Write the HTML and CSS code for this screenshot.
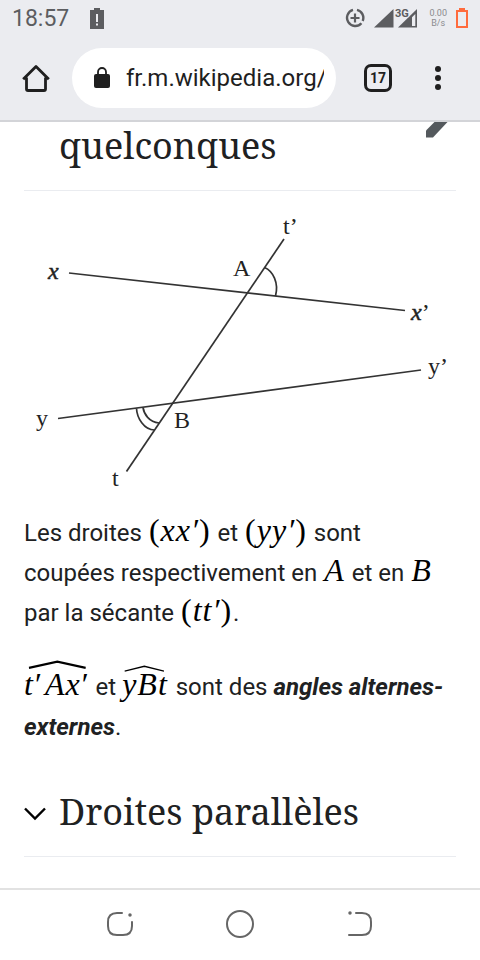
FILE: index.html
```html
<!DOCTYPE html>
<html lang="fr">
<head>
<meta charset="utf-8">
<meta name="viewport" content="width=device-width, initial-scale=1">
<title>Angles alternes-externes</title>
<link rel="stylesheet" href="styles.css">
</head>
<body>
<header class="chrome">
  <div class="status">
    <time class="clock">18:57</time>
    <svg class="warn" width="16" height="22" viewBox="0 0 16 22" aria-hidden="true">
      <path d="M1 2h4V0h6v2h4v19H1z" fill="#5c5d60"/>
      <path d="M8 6v8M8 15.500v2" stroke="#ebecf0" stroke-width="2"/>
    </svg>
    <div class="signals">
      <svg width="20" height="20" viewBox="0 0 20 20" fill="none" stroke="#5c5d60" aria-hidden="true">
        <path d="M8 1.900A8.200 8.200 0 1 0 16.400 15.200M12 1.900A8.200 8.200 0 0 1 17.700 13" stroke-width="2.400"/>
        <path d="M10 5.500v9M5.500 10h9" stroke-width="2.200"/>
      </svg>
      <svg width="44" height="20" viewBox="0 0 44 20" aria-hidden="true">
        <path d="M0 19.500 19.500 1v18.500z" fill="#5c5d60"/>
        <path d="M24 19.500 43 1v18.500z" fill="#5c5d60"/>
        <path d="M38 9.200 41.300 6v12H38z" fill="#ebecf0"/>
        <text class="net" x="21" y="9">3G</text>
      </svg>
      <div class="rate"><span>0.00</span><span>B/s</span></div>
      <svg width="12" height="20" viewBox="0 0 12 20" aria-hidden="true">
        <path d="M1 3h10v16H1z" fill="none" stroke="#ff6b3d" stroke-width="2"/>
        <path d="M3 0h6v3H3z" fill="#ff6b3d"/>
      </svg>
    </div>
  </div>
  <div class="toolbar">
    <button class="tool home" type="button" aria-label="Accueil">
      <svg width="28" height="28" viewBox="0 0 28 28" fill="none" stroke="#1f1f1f" stroke-width="2.800" stroke-linejoin="round">
        <path d="M1.200 15.300 14 2.500l12.800 12.800M4.500 13.500V25q0 1.500 1.500 1.500h16q1.500 0 1.500-1.500V13.500"/>
      </svg>
    </button>
    <div class="address">
      <svg width="16" height="22" viewBox="0 0 16 22" aria-hidden="true">
        <rect y="7" width="16" height="14" rx="2" fill="#1f1f1f"/>
        <path d="M4 8V5a4 4 0 0 1 8 0v3" fill="none" stroke="#1f1f1f" stroke-width="1.800"/>
      </svg>
      <input class="url" type="text" aria-label="Adresse" value="fr.m.wikipedia.org/">
    </div>
    <button class="tool tabs" type="button" aria-label="17 onglets"><span class="count">17</span></button>
    <button class="tool more" type="button" aria-label="Menu">
      <svg width="6" height="24" viewBox="0 0 6 24" fill="#1f1f1f"><circle cx="3" cy="3" r="3"/><circle cx="3" cy="12" r="3"/><circle cx="3" cy="21" r="3"/></svg>
    </button>
  </div>
</header>

<main class="article">
  <div class="section">
    <h2 class="title">quelconques</h2>
    <a class="edit" href="#edit" aria-label="Modifier">
      <svg width="22" height="16" viewBox="0 0 22 16"><path d="M8.500 0h13L7 15.500H0V8.500z" fill="#54595d"/></svg>
    </a>
  </div>

  <svg class="figure" viewBox="24 200 432 300" role="img" aria-label="Deux droites coupées par une sécante">
    <g fill="none" stroke="#333" stroke-width="1.700">
      <path d="M69 273 405 310.500"/>
      <path d="M58 418.500 421 370"/>
      <path d="M284 239 126.500 471.500"/>
      <path d="M264.500 267.500C273 271 279 283 275.500 296"/>
      <path d="M143 407.500C144 414 149 422 159 423"/>
      <path d="M136.500 408.500C137 418 144 430 154.500 430"/>
    </g>
    <g class="labels">
      <text class="var" x="48" y="279">x</text>
      <text x="233" y="276">A</text>
      <text x="283" y="234">t’</text>
      <text x="411" y="320"><tspan class="var">x</tspan>’</text>
      <text x="428" y="374">y’</text>
      <text x="36" y="426">y</text>
      <text x="174" y="428">B</text>
      <text x="112" y="486">t</text>
    </g>
  </svg>

  <p>Les droites <span class="math">(<i>x</i><i>x</i><i>′</i>)</span> et <span class="math">(<i>y</i><i>y</i><i>′</i>)</span> sont<br>coupées respectivement en <span class="math"><i>A</i></span> et en <span class="math"><i>B</i></span> par la sécante <span class="math">(<i>t</i><i>t</i><i>′</i>)</span>.</p>

  <p><span class="math angle"><i>t′</i><i class="arm">A</i><i>x′</i><svg class="hat" viewBox="0 0 60 8" preserveAspectRatio="none" aria-hidden="true"><path d="M1 7 30 1.500 59 7" fill="none" stroke="#000" stroke-width="2"/></svg></span> et <span class="math angle"><i>y</i><i>B</i><i>t</i><svg class="hat low" viewBox="0 0 60 8" preserveAspectRatio="none" aria-hidden="true"><path d="M1 7 30 1.500 59 7" fill="none" stroke="#000" stroke-width="1.600"/></svg></span> sont des <b class="term">angles alternes-externes</b>.</p>

  <div class="section next">
    <svg class="chevron" width="22" height="14" viewBox="0 0 22 14" aria-hidden="true"><path d="M1 1.500 11 11.500 21 1.500" fill="none" stroke="#000" stroke-width="2.400"/></svg>
    <h2 class="title">Droites parallèles</h2>
  </div>
</main>

<nav class="navbar" aria-label="Système">
  <button type="button" aria-label="Récents">
    <svg width="28" height="28" viewBox="0 0 28 28" fill="none" stroke="#666" stroke-width="2" stroke-linecap="round"><path d="M16 3H11Q2 3 2 12v4q0 9 9 9h6q9 0 9-9v-4"/><circle cx="24" cy="5" r="1" fill="#666" stroke-width="1.500"/></svg>
  </button>
  <button type="button" aria-label="Accueil du téléphone">
    <svg width="28" height="28" viewBox="0 0 28 28" fill="none" stroke="#666" stroke-width="2"><circle cx="14" cy="14" r="13"/></svg>
  </button>
  <button type="button" aria-label="Retour">
    <svg width="28" height="28" viewBox="0 0 28 28" fill="none" stroke="#666" stroke-width="2" stroke-linecap="round"><path d="M10 3h6q9 0 9 9v4q0 9-9 9H3"/><circle cx="4" cy="3" r="1" fill="#666" stroke-width="1.500"/></svg>
  </button>
</nav>
</body>
</html>
```

FILE: styles.css
```css
* { box-sizing: border-box; }

body {
  display: flex;
  flex-direction: column;
  min-height: 100vh;
  margin: 0;
  background: #fff;
  color: #202122;
  font-family: Roboto, "Liberation Sans", sans-serif;
  font-size: 24px;
  line-height: 40px;
}

button {
  display: flex;
  align-items: center;
  justify-content: center;
  padding: 0;
  border: 0;
  background: none;
  color: inherit;
  font: inherit;
}

svg { display: block; flex: none; }

.chrome {
  background: #ebecf0;
  border-bottom: 2px solid #d3d4d8;
}

.status {
  display: flex;
  align-items: center;
  height: 38px;
  padding: 0 12px;
  color: #5c5d60;
}

.clock { font-size: 23px; }

.warn { margin-left: 20px; }

.signals {
  display: flex;
  align-items: center;
  gap: 9px;
  height: 34px;
  margin: 0 0 2px auto;
}

.net {
  fill: #5c5d60;
  stroke: #ebecf0;
  stroke-width: 2px;
  paint-order: stroke;
  font-size: 11px;
  font-weight: 700;
}

.rate {
  display: flex;
  flex-direction: column;
  align-items: center;
  margin-left: 2px;
  color: #8a8b8e;
  font-size: 9px;
  line-height: 10px;
}

.toolbar {
  display: flex;
  align-items: center;
  padding: 10px 24px 12px 0;
}

.tool { height: 60px; color: #1f1f1f; }
.home { width: 72px; }
.tabs { width: 84px; }
.more { width: 36px; }

.address {
  display: flex;
  flex: 1;
  align-items: center;
  gap: 16px;
  min-width: 0;
  height: 60px;
  padding: 0 12px 0 22px;
  border-radius: 30px;
  background: #fff;
}

.url {
  flex: 1;
  min-width: 0;
  padding: 0;
  border: 0;
  outline: 0;
  background: none;
  color: #1f1f1f;
  font: inherit;
}

.count {
  width: 28px;
  height: 28px;
  border: 3px solid #1f1f1f;
  border-radius: 7px;
  font-size: 14px;
  font-weight: 700;
  line-height: 22px;
}

.article {
  flex: 1;
  padding: 0 24px;
}

.section {
  display: flex;
  align-items: flex-start;
  justify-content: space-between;
  padding: 0 8px 20px 35px;
  border-bottom: 1px solid #eaecf0;
}

.title {
  margin: 0;
  font-family: "Noto Serif", "Liberation Serif", serif;
  font-size: 36px;
  font-weight: 400;
  line-height: 48px;
}

.next {
  justify-content: flex-start;
  gap: 13px;
  margin-top: 41px;
  padding-left: 0;
}

.chevron { margin-top: 19px; }

.figure {
  width: 100%;
  margin-top: 9px;
}

.labels {
  fill: #222;
  font-family: "Liberation Serif", serif;
  font-size: 24px;
}

.var {
  font-style: italic;
  stroke: #222;
  stroke-width: 0.5px;
}

p { margin: 13px 0 34px; }
p + p { margin: 0; }

.math {
  position: relative;
  display: inline-flex;
  gap: 1px;
  margin: 0 2px 0 1px;
  color: #000;
  font-family: "Liberation Serif", serif;
  font-size: 32px;
  line-height: 32px;
}

.angle { margin: 0 3px 0 0; }

.arm { margin-left: 4px; }

.hat {
  position: absolute;
  top: -8px;
  left: 4px;
  width: calc(100% - 4px);
  height: 9px;
}

.low {
  top: -3px;
  left: 2px;
  height: 7px;
}

.term { font-style: italic; }

.navbar {
  display: grid;
  grid-template-columns: repeat(3, 1fr);
  height: 72px;
  padding: 0 60px 2px;
  border-top: 2px solid #e2e2e2;
}
```
